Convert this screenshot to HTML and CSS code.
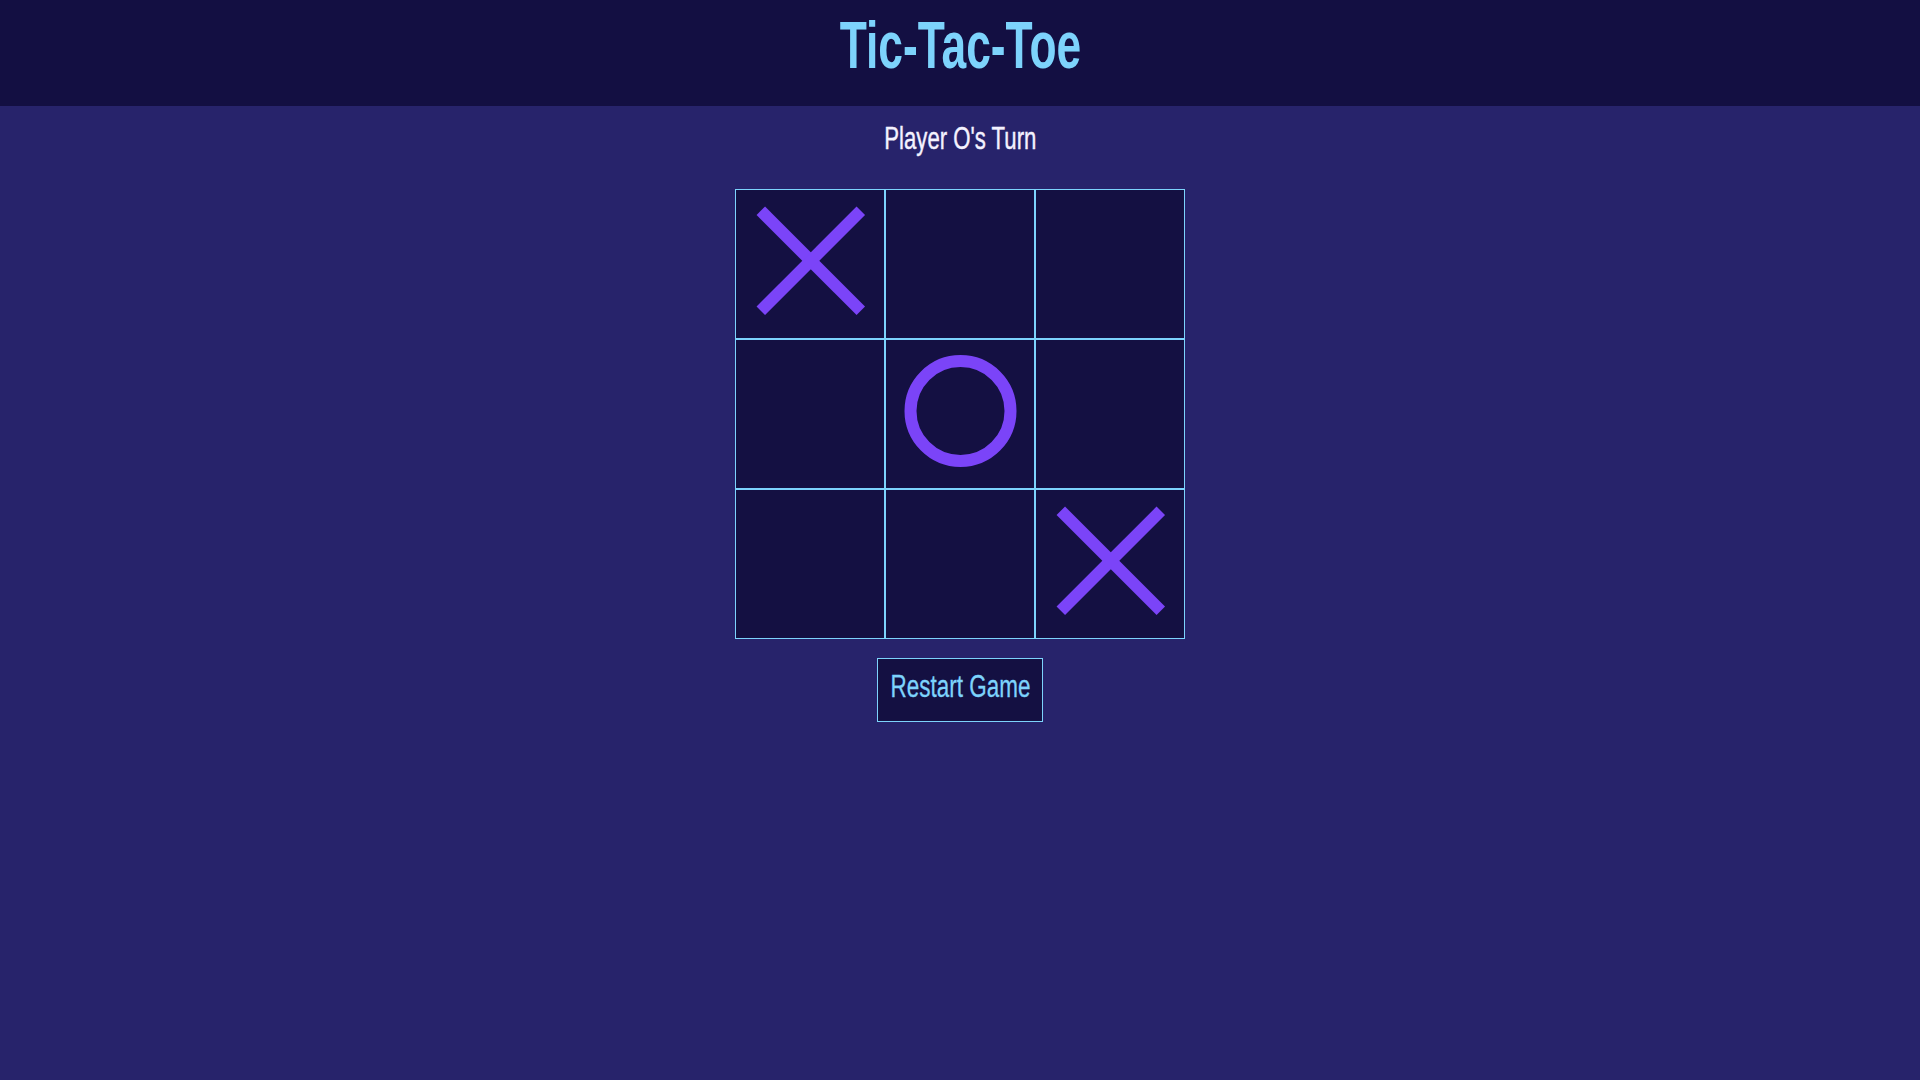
FILE: index.html
```html
<!DOCTYPE html>
<html lang="en">
<head>
<meta charset="utf-8">
<title>Tic-Tac-Toe</title>
<link rel="stylesheet" href="styles.css">
</head>
<body>
<header class="topbar">
  <h1 class="title"><span class="squeeze title-text">Tic-Tac-Toe</span></h1>
</header>
<main class="game">
  <p class="status"><span class="squeeze status-text">Player O's Turn</span></p>
  <div class="board">
    <div class="cell">
      <svg class="mark" viewBox="0 0 148 148" width="148" height="148"><line x1="24.8" y1="20.8" x2="124.8" y2="120.8"/><line x1="124.8" y1="20.8" x2="24.8" y2="120.8"/></svg>
    </div>
    <div class="cell"></div>
    <div class="cell"></div>
    <div class="cell"></div>
    <div class="cell">
      <svg class="mark" viewBox="0 0 148 148" width="148" height="148"><circle cx="74.5" cy="71" r="50"/></svg>
    </div>
    <div class="cell"></div>
    <div class="cell"></div>
    <div class="cell"></div>
    <div class="cell">
      <svg class="mark" viewBox="0 0 148 148" width="148" height="148"><line x1="24.8" y1="20.8" x2="124.8" y2="120.8"/><line x1="124.8" y1="20.8" x2="24.8" y2="120.8"/></svg>
    </div>
  </div>
  <button class="restart" type="button"><span class="squeeze btn-text">Restart Game</span></button>
</main>
</body>
</html>
```

FILE: styles.css
```css
* { box-sizing: border-box; }

html, body {
  margin: 0;
  padding: 0;
  height: 100%;
}

body {
  background: #27236b;
  font-family: "Liberation Sans", Arial, sans-serif;
  color: #f2f0ff;
}

.topbar {
  height: 106px;
  background: #130f42;
  display: flex;
  justify-content: center;
  align-items: flex-start;
  padding-top: 11px;
}

.title {
  margin: 0;
  font-size: 67px;
  line-height: 1;
  font-weight: 700;
  color: #7dd3fc;
}

.squeeze {
  display: inline-block;
  transform-origin: center;
  white-space: nowrap;
}

.title-text { transform: scaleX(0.662); }

.game {
  display: flex;
  flex-direction: column;
  align-items: center;
}

.status {
  margin: 17px 0 0;
  font-size: 31px;
  line-height: 1;
  font-weight: 400;
  color: #f4f2ff;
  -webkit-text-stroke: 0.4px #f4f2ff;
}

.status-text { transform: scaleX(0.715); }

.board {
  margin-top: 35px;
  display: grid;
  grid-template-columns: repeat(3, 150px);
  grid-template-rows: repeat(3, 150px);
}

.cell {
  background: #141042;
  border: 1px solid #7dd3fc;
  overflow: hidden;
}

.mark {
  display: block;
  fill: none;
  stroke: #7b44f8;
  stroke-width: 12;
  stroke-linecap: butt;
}

.restart {
  margin-top: 19px;
  width: 166px;
  height: 64px;
  padding: 0 0 7px;
  background: #141042;
  border: 1px solid #7dd3fc;
  color: #7dd3fc;
  font-family: "Liberation Sans", Arial, sans-serif;
  font-size: 31px;
  line-height: 1;
  display: flex;
  align-items: center;
  justify-content: center;
  cursor: pointer;
  -webkit-text-stroke: 0.3px #7dd3fc;
}

.btn-text { transform: scaleX(0.725); }
```
